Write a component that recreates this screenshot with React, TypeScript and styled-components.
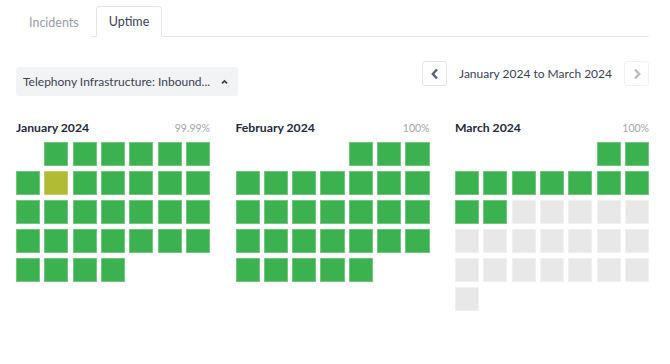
import React from "react";
import styled, { createGlobalStyle } from "styled-components";

const Global = createGlobalStyle`
  html, body { margin: 0; padding: 0; background: #ffffff; }
  body { font-family: Lato, "Open Sans", "Liberation Sans", sans-serif; color: #2c3345; }
  * { box-sizing: border-box; }
`;

const Page = styled.div`
  width: 633px;
  margin-left: 16px;
  padding-top: 6px;
`;

const TabBar = styled.div`
  display: flex;
  align-items: flex-end;
  gap: 4px;
  border-bottom: 1px solid #e3e5e8;
  height: 31px;
`;

const Tab = styled.div<{ $active?: boolean }>`
  height: 31px;
  padding: 0 12px;
  display: flex;
  align-items: center;
  font-size: 12.5px;
  color: ${(p) => (p.$active ? "#3b4256" : "#9a9da6")};
  border: 1px solid ${(p) => (p.$active ? "#e3e5e8" : "transparent")};
  border-bottom: ${(p) => (p.$active ? "1px solid #fff" : "none")};
  border-radius: 4px 4px 0 0;
  margin-bottom: -1px;
  background: #fff;
`;

const Controls = styled.div`
  display: flex;
  justify-content: space-between;
  align-items: flex-start;
  margin-top: 24px;
`;

const Dropdown = styled.div`
  margin-top: 6px;
  width: 222px;
  height: 29px;
  background: #f2f3f5;
  border-radius: 3px;
  display: flex;
  align-items: center;
  padding: 0 7px;
  font-size: 12px;
  color: #3b4256;
  gap: 11px;
  white-space: nowrap;
`;

const Nav = styled.div`
  display: flex;
  align-items: center;
  gap: 12px;
  font-size: 12px;
  color: #3b4256;
  white-space: nowrap;
`;

const NavButton = styled.div<{ $disabled?: boolean }>`
  width: 25px;
  height: 25px;
  border: 1px solid ${(p) => (p.$disabled ? "#eef0f2" : "#e3e5e8")};
  border-radius: 3px;
  display: flex;
  align-items: center;
  justify-content: center;
  color: ${(p) => (p.$disabled ? "#b9bcc2" : "#5a6072")};
`;

const Months = styled.div`
  display: grid;
  grid-template-columns: repeat(3, 194px);
  column-gap: 25.5px;
  margin-top: 25px;
`;

const Month = styled.div`
  display: flex;
  flex-direction: column;
`;

const MonthHead = styled.div`
  display: flex;
  justify-content: space-between;
  align-items: flex-start;
  height: 21px;
  line-height: 14px;
`;

const MonthTitle = styled.div`
  font-size: 12.2px;
  font-weight: 700;
  color: #232a3d;
`;

const Percent = styled.div`
  font-size: 10.5px;
  color: #a3a5aa;
`;

const Grid = styled.div`
  display: grid;
  grid-template-columns: repeat(7, 1fr);
  column-gap: 4.3px;
  row-gap: 5px;
`;

type Status = "up" | "partial" | "future" | "empty";

const Cell = styled.div<{ $s: Status }>`
  height: 24px;
  background: ${(p) =>
    p.$s === "up" ? "#3cb14f" : p.$s === "partial" ? "#b1bc34" : p.$s === "future" ? "#e8e8e8" : "transparent"};
  box-shadow: ${(p) =>
    p.$s === "empty" ? "none" : p.$s === "future" ? "inset 0 0 0 1px #f0f0f0" : "inset 0 0 0 1px rgba(255,255,255,0.28)"};
`;

const ChevLeft = () => (
  <svg width="10" height="12" viewBox="0 0 10 12">
    <path d="M7 1.5 L2.8 6 L7 10.5" fill="none" stroke="currentColor" strokeWidth="2.4" strokeLinejoin="miter" />
  </svg>
);
const ChevRight = () => (
  <svg width="10" height="12" viewBox="0 0 10 12">
    <path d="M3 1.5 L7.2 6 L3 10.5" fill="none" stroke="currentColor" strokeWidth="2.4" strokeLinejoin="miter" />
  </svg>
);
const Caret = () => (
  <svg width="7" height="6" viewBox="0 0 7 6">
    <path d="M1 4.4 L3.5 1.9 L6 4.4" fill="none" stroke="#3b4256" strokeWidth="1.8" />
  </svg>
);

type MonthData = { title: string; pct: string; offset: number; days: number; status: (d: number) => Status };

const months: MonthData[] = [
  { title: "January 2024", pct: "99.99%", offset: 1, days: 31, status: (d) => (d === 8 ? "partial" : "up") },
  { title: "February 2024", pct: "100%", offset: 4, days: 29, status: () => "up" },
  { title: "March 2024", pct: "100%", offset: 5, days: 31, status: (d) => (d <= 11 ? "up" : "future") },
];

export default function App() {
  return (
    <>
      <Global />
      <Page>
        <TabBar>
          <Tab>Incidents</Tab>
          <Tab $active>Uptime</Tab>
        </TabBar>
        <Controls>
          <Dropdown>
            <span>Telephony Infrastructure: Inbound...</span>
            <Caret />
          </Dropdown>
          <Nav>
            <NavButton>
              <ChevLeft />
            </NavButton>
            <span>January 2024 to March 2024</span>
            <NavButton $disabled>
              <ChevRight />
            </NavButton>
          </Nav>
        </Controls>
        <Months>
          {months.map((m) => {
            const cells: Status[] = [];
            for (let i = 0; i < m.offset; i++) cells.push("empty");
            for (let d = 1; d <= m.days; d++) cells.push(m.status(d));
            return (
              <Month key={m.title}>
                <MonthHead>
                  <MonthTitle>{m.title}</MonthTitle>
                  <Percent>{m.pct}</Percent>
                </MonthHead>
                <Grid>
                  {cells.map((s, i) => (
                    <Cell key={i} $s={s} />
                  ))}
                </Grid>
              </Month>
            );
          })}
        </Months>
      </Page>
    </>
  );
}
